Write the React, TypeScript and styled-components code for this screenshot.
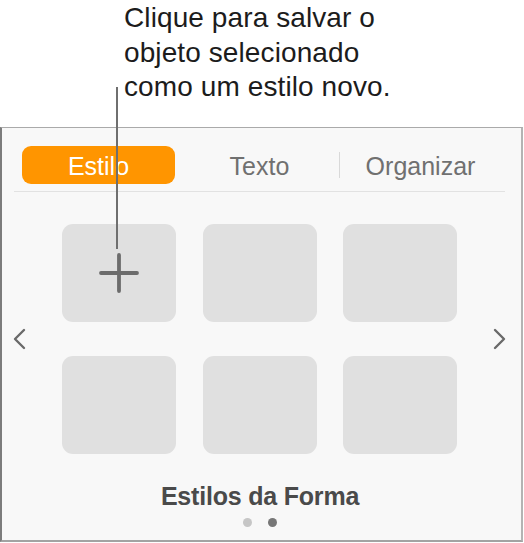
import React from "react";
import styled, { createGlobalStyle } from "styled-components";

const Global = createGlobalStyle`
  html, body { margin: 0; padding: 0; background: #ffffff; }
  body { font-family: "Liberation Sans", Arial, sans-serif; }
  * { box-sizing: border-box; }
`;

const Page = styled.div`
  position: relative;
  width: 524px;
  height: 543px;
  padding-top: 1px;
  display: flex;
  flex-direction: column;
`;

const Callout = styled.div`
  margin-left: 124px;
  font-size: 28px;
  line-height: 34.5px;
  color: #1c1c1c;
  letter-spacing: 0.1px;
`;

const Leader = styled.div`
  position: absolute;
  left: 116px;
  top: 87px;
  width: 2px;
  height: 162px;
  background: #6f6f6f;
  z-index: 5;
`;

const Panel = styled.div`
  margin-top: 22px;
  width: 523px;
  height: 415px;
  background: #f8f8f8;
  border-left: 2px solid #7c7c7c;
  border-right: 2px solid #b3b3b3;
  border-top: 1px solid #aaaaaa;
  border-bottom: 2px solid #a3a3a3;
  display: flex;
  flex-direction: column;
  padding-top: 18px;
`;

const Tabs = styled.div`
  display: flex;
  margin-left: 16px;
  height: 38px;
`;

const Tab = styled.div<{ $active?: boolean; $sep?: boolean }>`
  position: relative;
  width: 161px;
  padding: ${(p) => (p.$active ? "0 4px" : "4px 4px 0")};
  display: flex;
  align-items: center;
  justify-content: center;
  font-size: 25px;
  color: ${(p) => (p.$active ? "#ffffff" : "#707070")};
  &::before {
    content: "";
    display: ${(p) => (p.$sep ? "block" : "none")};
    position: absolute;
    left: -1px;
    top: 6px;
    width: 1px;
    height: 26px;
    background: #d9d9d9;
  }
`;

const Pill = styled.div`
  width: 100%;
  height: 38px;
  padding-top: 4px;
  border-radius: 9px;
  background: #ff9500;
  display: flex;
  align-items: center;
  justify-content: center;
`;

const Divider = styled.div`
  margin: 7px 16px 0 12px;
  height: 1.5px;
  background: #e2e2e2;
`;

const Body = styled.div`
  margin-top: 32px;
  display: flex;
  align-items: center;
  padding-left: 10px;
`;

const Chevron = styled.svg`
  width: 15px;
  height: 22px;
  flex: none;
`;

const Grid = styled.div`
  margin: 0 35px;
  display: grid;
  grid-template-columns: repeat(3, 114px);
  grid-template-rows: repeat(2, 98px);
  column-gap: 26.5px;
  row-gap: 34px;
`;

const Tile = styled.div`
  border-radius: 11px;
  background: #e0e0e0;
  display: flex;
  align-items: center;
  justify-content: center;
`;

const Title = styled.div`
  margin-top: 27px;
  text-align: center;
  padding-right: 3px;
  font-size: 25px;
  line-height: 30px;
  font-weight: 700;
  color: #4a4a4a;
  letter-spacing: -0.2px;
`;

const Dots = styled.div`
  margin-top: 7px;
  display: flex;
  justify-content: center;
  gap: 16px;
  padding-right: 3px;
`;

const Dot = styled.div<{ $on?: boolean }>`
  width: 9px;
  height: 9px;
  border-radius: 50%;
  background: ${(p) => (p.$on ? "#777777" : "#c6c6c6")};
`;

const Plus = () => (
  <svg width="40" height="40" viewBox="0 0 40 40">
    <path d="M20 2 V38 M2 20 H38" stroke="#6c6c6c" strokeWidth="3.8" strokeLinecap="round" fill="none" />
  </svg>
);

export default function App() {
  return (
    <>
      <Global />
      <Page>
        <Callout>
          Clique para salvar o
          <br />
          objeto selecionado
          <br />
          como um estilo novo.
        </Callout>
        <Leader />
        <Panel>
          <Tabs>
            <Tab $active>
              <Pill>Estilo</Pill>
            </Tab>
            <Tab>Texto</Tab>
            <Tab $sep>Organizar</Tab>
          </Tabs>
          <Divider />
          <Body>
            <Chevron viewBox="0 0 15 22">
              <path d="M12 2 L3 11 L12 20" stroke="#6a6a6a" strokeWidth="2.4" fill="none" strokeLinecap="round" strokeLinejoin="round" />
            </Chevron>
            <Grid>
              <Tile>
                <Plus />
              </Tile>
              <Tile />
              <Tile />
              <Tile />
              <Tile />
              <Tile />
            </Grid>
            <Chevron viewBox="0 0 15 22">
              <path d="M3 2 L12 11 L3 20" stroke="#6a6a6a" strokeWidth="2.4" fill="none" strokeLinecap="round" strokeLinejoin="round" />
            </Chevron>
          </Body>
          <Title>Estilos da Forma</Title>
          <Dots>
            <Dot />
            <Dot $on />
          </Dots>
        </Panel>
      </Page>
    </>
  );
}
